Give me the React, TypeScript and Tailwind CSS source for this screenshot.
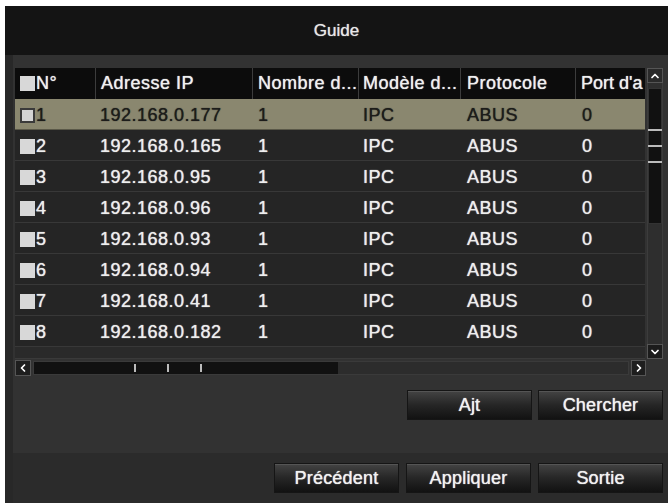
import { ChevronUp, ChevronDown, ChevronLeft, ChevronRight } from "lucide-react";

const rows = [
  { n: 1, ip: "192.168.0.177" },
  { n: 2, ip: "192.168.0.165" },
  { n: 3, ip: "192.168.0.95" },
  { n: 4, ip: "192.168.0.96" },
  { n: 5, ip: "192.168.0.93" },
  { n: 6, ip: "192.168.0.94" },
  { n: 7, ip: "192.168.0.41" },
  { n: 8, ip: "192.168.0.182" },
];

// column widths: N°, Adresse IP, Nombre, Modèle, Protocole, Port
const cols = ["w-[80px]", "w-[157px]", "w-[106px]", "w-[102px]", "w-[115px]", "w-[70px]"];

function Btn({ label }: { label: string }) {
  return (
    <button className="w-[125px] h-[30px] flex items-center justify-center border border-[#151515] bg-gradient-to-b from-[#444] via-[#262626] to-[#121212] text-[18px] text-[#f2f2f2] tracking-[0.2px] [text-shadow:0_0_1px_#fff] shadow-[inset_0_1px_0_#555]">
      {label}
    </button>
  );
}

function Box({ selected }: { selected?: boolean }) {
  return (
    <span
      className={
        selected
          ? "w-[15px] h-[15px] shrink-0 bg-[#d4d4d4] border-2 border-[#3a3a3a]"
          : "w-[15px] h-[15px] shrink-0 bg-[#d8d8d8]"
      }
    />
  );
}

export default function App() {
  return (
    <div
      className="w-[670px] h-[503px] bg-white pt-[6px] pl-[5px] pr-[2px] flex"
      style={{ fontFamily: '"Liberation Sans", Arial, sans-serif' }}
    >
      <div className="flex-1 flex flex-col bg-[#323232] border-l-[8px] border-[#282828]">
        {/* title */}
        <div className="h-[49px] shrink-0 bg-[#141414] flex items-center justify-center text-[17px] text-[#e8e8e8] [text-shadow:0_0_1px_#ccc] -ml-[8px]">
          Guide
        </div>

        <div className="pt-[13px] pl-[2px] pr-[5px] flex flex-col">
          <div className="flex gap-[2px]">
            {/* table */}
            <div className="w-[630px] flex flex-col text-[18px] tracking-[0.5px] [text-shadow:0_0_1px_currentColor]">
              <div className="h-[31px] flex bg-[#0c0c0c] text-[#f0f0f0]">
                <div className={`${cols[0]} flex items-center gap-[1px] pl-[5px]`}>
                  <Box />
                  <span>N°</span>
                </div>
                <div className={`${cols[1]} flex items-center px-[5px] border-l border-[#3c3c3c] whitespace-nowrap overflow-hidden`}>Adresse IP</div>
                <div className={`${cols[2]} flex items-center px-[5px] border-l border-[#3c3c3c] whitespace-nowrap overflow-hidden`}>Nombre d...</div>
                <div className={`${cols[3]} flex items-center px-[4px] border-l border-[#3c3c3c] whitespace-nowrap overflow-hidden`}>Modèle d...</div>
                <div className={`${cols[4]} flex items-center px-[6px] border-l border-[#3c3c3c] whitespace-nowrap overflow-hidden`}>Protocole</div>
                <div className={`${cols[5]} flex items-center pl-[5px] border-l border-[#3c3c3c] whitespace-nowrap tracking-normal`}>Port d'a</div>
              </div>
              {rows.map((r) => {
                const sel = r.n === 1;
                return (
                  <div
                    key={r.n}
                    className={
                      sel
                        ? "h-[31px] flex items-center pt-[3px] bg-[#8a876f] text-[#1c1c1a] border-b border-[#5a5848]"
                        : "h-[31px] flex items-center pt-[3px] bg-[#252525] text-[#eeeeee] border-b border-[#383838]"
                    }
                  >
                    <div className={`${cols[0]} flex items-center gap-[1px] pl-[5px]`}>
                      <Box selected={sel} />
                      <span>{r.n}</span>
                    </div>
                    <div className={`${cols[1]} px-[5px]`}>{r.ip}</div>
                    <div className={`${cols[2]} px-[6px]`}>1</div>
                    <div className={`${cols[3]} px-[5px]`}>IPC</div>
                    <div className={`${cols[4]} px-[7px]`}>ABUS</div>
                    <div className={`${cols[5]} px-[7px]`}>0</div>
                  </div>
                );
              })}
              <div className="h-[12px] bg-[#2a2a2a] border-b border-[#3a3a3a]" />
            </div>

            {/* vertical scrollbar */}
            <div className="w-[16px] flex flex-col">
              <div className="h-[15px] flex items-center justify-center bg-[#2a2a2a] border border-[#555]">
                <ChevronUp size={12} strokeWidth={3.5} className="text-white" />
              </div>
              <div className="h-[261px] flex flex-col pt-[5px] bg-[#2e2e2e] border-x border-[#3c3c3c]">
                <div className="h-[136px] bg-[#111] border border-[#333] flex flex-col items-center pt-[40px] gap-[14px]">
                  <span className="w-[14px] h-[2px] bg-[#bbb]" />
                  <span className="w-[14px] h-[2px] bg-[#bbb]" />
                  <span className="w-[14px] h-[2px] bg-[#bbb]" />
                </div>
              </div>
              <div className="h-[15px] flex items-center justify-center bg-[#1c1c1c] border border-[#555]">
                <ChevronDown size={12} strokeWidth={3.5} className="text-white" />
              </div>
            </div>
          </div>

          {/* horizontal scrollbar */}
          <div className="w-[631px] h-[16px] mt-[1px] flex items-center gap-[2px]">
            <div className="w-[16px] h-[16px] flex items-center justify-center bg-[#1e1e1e] border border-[#555]">
              <ChevronLeft size={12} strokeWidth={3.5} className="text-white" />
            </div>
            <div className="flex-1 h-[14px] flex bg-[#2c2c2c] border border-[#3a3a3a]">
              <div className="w-[304px] h-full bg-[#111] flex items-center pl-[100px] gap-[31px]">
                <span className="w-[2px] h-[8px] bg-[#bbb]" />
                <span className="w-[2px] h-[8px] bg-[#bbb]" />
                <span className="w-[2px] h-[8px] bg-[#bbb]" />
              </div>
            </div>
            <div className="w-[15px] h-[16px] flex items-center justify-center bg-[#1e1e1e] border border-[#555]">
              <ChevronRight size={12} strokeWidth={3.5} className="text-white" />
            </div>
          </div>

          <div className="mt-[14px] flex justify-end gap-[6px]">
            <Btn label="Ajt" />
            <Btn label="Chercher" />
          </div>
        </div>

        <div className="mt-auto h-[50px] shrink-0 bg-[#2b2b2b] flex items-center justify-end gap-[7px] pr-[5px]">
          <Btn label="Précédent" />
          <Btn label="Appliquer" />
          <Btn label="Sortie" />
        </div>
      </div>
    </div>
  );
}
